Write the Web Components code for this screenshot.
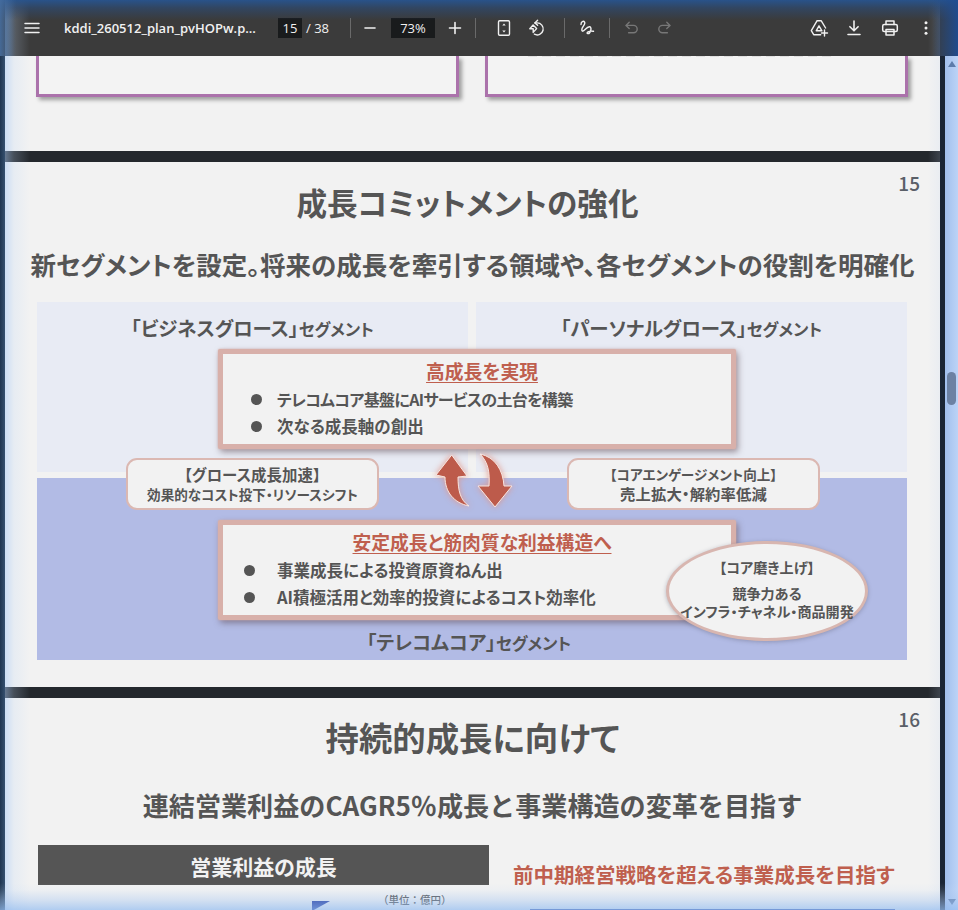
<!DOCTYPE html>
<html lang="ja">
<head>
<meta charset="utf-8">
<title>kddi_260512_plan_pvHOPw.pdf</title>
<style>
  html, body { margin: 0; height: 100%; overflow: hidden; background: #1b2636; }
  body { font-family: "Noto Sans CJK JP", "Noto Sans", sans-serif; color: #555; }
  .kana { font-size: 15.400px; letter-spacing: .1px; }
  .kanji { font-size: 15.300px; letter-spacing: .15px; }
  .tight { font-size: 16px; letter-spacing: -.65px; }
</style>
</head>
<body>
<pdf-viewer>
  <pdf-toolbar slot="toolbar" name="kddi_260512_plan_pvHOPw.p..." page="15" pages="38" zoom="73%"></pdf-toolbar>

  <pdf-page height="95">
    <clipped-boxes></clipped-boxes>
  </pdf-page>

  <pdf-page height="525" number="15">
    <slide-heading size="30.6" sub-size="25.5" top="18" sub-gap="21" shift="10">
      <span slot="title">成長コミットメントの強化</span>
      <span slot="sub">新セグメントを設定。将来の成長を牽引する領域や、各セグメントの役割を明確化</span>
    </slide-heading>
    <segment-diagram>
      <seg-label slot="left" name="「ビジネスグロース」"></seg-label>
      <seg-label slot="right" name="「パーソナルグロース」"></seg-label>
      <seg-label slot="bottom" name="「テレコムコア」"></seg-label>

      <call-box slot="over" style="left:213px;top:47px" heading="高成長を実現" dot="28">
        <li class="tight">テレコムコア基盤にAIサービスの土台を構築</li>
        <li>次なる成長軸の創出</li>
      </call-box>
      <call-box slot="over" style="left:213px;top:218px" heading="安定成長と筋肉質な利益構造へ" dot="21">
        <li>事業成長による投資原資ねん出</li>
        <li>AI積極活用と効率的投資によるコスト効率化</li>
      </call-box>

      <note-pill slot="over" style="left:121px;top:156px"><span class="kana">【グロース成長加速】</span><br>効果的なコスト投下・リソースシフト</note-pill>
      <note-pill slot="over" style="left:562px;top:156px">【コアエンゲージメント向上】<br><span class="kanji">売上拡大・解約率低減</span></note-pill>
      <swap-arrows slot="over" style="left:425px;top:148px"></swap-arrows>
      <note-oval slot="over" style="left:661px;top:239px">
        <span class="h">【コア磨き上げ】</span>
        競争力ある<br>インフラ・チャネル・商品開発
      </note-oval>
    </segment-diagram>
  </pdf-page>

  <pdf-page height="212" number="16">
    <slide-heading size="33.4" sub-size="26.1" top="17" sub-gap="27" shift="0" plain-sub>
      <span slot="title">持続的成長に向けて</span>
      <span slot="sub">連結営業利益のCAGR5％成長と事業構造の変革を目指す</span>
    </slide-heading>
    <profit-row></profit-row>
  </pdf-page>
</pdf-viewer>

<script>
const JP = '"Noto Sans CJK JP", "Noto Sans", sans-serif';

class PdfViewer extends HTMLElement {
  constructor() {
    super();
    this.attachShadow({ mode: 'open' }).innerHTML = `
      <style>
        :host { display: block; position: relative; width: 958px; height: 910px; overflow: hidden; background: #1b2636; }
        .body { display: grid; grid-template-columns: 5px 935px 5px 13px; height: 854px; }
        .pages { display: flex; flex-direction: column; gap: 11px; background: #24282d; overflow: hidden; }
        .glow { position: absolute; inset: 0; pointer-events: none;
          background:
            linear-gradient(to top, rgba(150,190,240,.72) 0, rgba(170,200,240,.42) 10px, rgba(200,220,245,.12) 20px, rgba(200,220,245,0) 27px),
            linear-gradient(to right, rgba(0,0,0,0) 5px, rgba(165,200,245,.5) 5px, rgba(190,215,245,.22) 14px, rgba(200,220,245,0) 30px),
            linear-gradient(to left, rgba(0,0,0,0) 18px, rgba(190,210,240,.16) 18px, rgba(200,220,245,0) 30px);
        }
        .top { position: absolute; left: 0; right: 0; top: 0; height: 20px; pointer-events: none;
          background: linear-gradient(to bottom, rgba(40,84,142,.95), rgba(44,76,120,.62) 8px, rgba(60,60,60,0) 20px); }
        .left { position: absolute; left: 0; top: 0; width: 16px; height: 56px; pointer-events: none;
          background: linear-gradient(to right, rgba(70,110,160,.9), rgba(60,60,60,0)); }
        .right { position: absolute; right: 0; top: 0; width: 26px; height: 56px; pointer-events: none;
          background: linear-gradient(to left, rgba(30,76,145,.95), rgba(60,60,60,0)); }
        .strip { background: linear-gradient(to right, #1e3550, #35506f); }
        .strip.r { background: #1b2636; }
      </style>
      <slot name="toolbar"></slot>
      <div class="body">
        <div class="strip"></div>
        <div class="pages"><slot></slot></div>
        <div class="strip r"></div>
        <scroll-rail></scroll-rail>
      </div>
      <div class="glow"></div>
      <div class="top"></div><div class="left"></div><div class="right"></div>`;
  }
}

const ICONS = {
  menu: '<path d="M3 5.5h14M3 10h14M3 14.5h14" stroke-width="1.5"/>',
  minus: '<path d="M5 10h10" stroke-width="1.6"/>',
  plus: '<path d="M10 4.5v11M4.5 10h11" stroke-width="1.6"/>',
  fit: '<rect x="4.5" y="2.8" width="11" height="14.4" rx="1.2" stroke-width="1.4"/><path d="M10 5.4l-1.7 2h3.4zM10 14.6l-1.7-2h3.4z" fill="currentColor" stroke="none"/>',
  rotate: '<path d="M7.2 10.8l-3.4-.1 3.3-3.7 3.5 3.6-3.4 3.8z" stroke-width="1.4"/><path d="M8.8 4.9h2.2a6 6 0 1 1-2.6 11.3" stroke-width="1.4"/><path d="M11.6 2.2L8.9 4.9l2.7 2.3" stroke-width="1.4"/>',
  draw: '<path d="M4 6.500C4 3.600 6.500 2.500 7.600 4.100 9.200 6.500 3.500 9.800 5 12.700 6.200 15 9.500 8.200 12.600 8.700 15.500 9.200 13.300 16.200 10.700 15.600 8.800 15.100 11.500 12.400 16.500 13.300" stroke-width="1.4"/>',
  undo: '<path d="M7.200 4.200L4 7.400l3.200 3" stroke-width="1.4"/><path d="M4.400 7.400h7.100a3.700 3.700 0 0 1 0 7.400H6.600" stroke-width="1.4"/>',
  redo: '<path d="M12.800 4.200L16 7.400l-3.200 3" stroke-width="1.4"/><path d="M15.600 7.400H8.500a3.700 3.700 0 0 0 0 7.400h4.900" stroke-width="1.4"/>',
  drive: '<path d="M8 2.800h4.300l4.300 7.200M8 2.800L2.300 12.700l2.400 4h7" stroke-width="1.400"/><path d="M10 7.800l2.900 5H7.200zM15.500 12v6M12.500 15h6" stroke-width="1.400"/>',
  download: '<path d="M10 3v9.500M5.900 8.700l4.100 4.100 4.100-4.100M4 16.500h12" stroke-width="1.600"/>',
  print: '<path d="M6 6.500V3h8v3.500" stroke-width="1.500"/><rect x="2.700" y="6.500" width="14.600" height="7" rx="1.500" stroke-width="1.500"/><path d="M6 11.500h8V17H6z" stroke-width="1.500"/>',
  more: '<circle cx="10" cy="4.800" r="1.500" fill="currentColor" stroke="none"/><circle cx="10" cy="10" r="1.500" fill="currentColor" stroke="none"/><circle cx="10" cy="15.200" r="1.500" fill="currentColor" stroke="none"/>'
};

function icon(name, cls) {
  return `<span class="ic ${cls || ''}"><svg viewBox="0 0 20 20" width="20" height="20" fill="none" stroke="currentColor" stroke-linecap="round" stroke-linejoin="round">${ICONS[name]}</svg></span>`;
}

class PdfToolbar extends HTMLElement {
  connectedCallback() {
    const a = (n) => this.getAttribute(n);
    this.attachShadow({ mode: 'open' }).innerHTML = `
      <style>
        :host { display: flex; align-items: center; height: 56px; padding-left: 22px; box-sizing: border-box; background: #3b3b3b; color: #f1f1f1;
          font: 13px "Open Sans", "Noto Sans", sans-serif; position: relative; }
        .ic { display: flex; align-items: center; justify-content: center; width: 20px; height: 20px; flex: none; }
        .ic.off { color: #777; }
        .name { font-weight: 600; margin-left: 22px; width: 214px; white-space: nowrap; }
        .box { background: #191b1c; height: 20px; line-height: 20px; text-align: center; flex: none; }
        .pg { width: 24px; }
        .of { margin-left: 4px; width: 44px; }
        .sep { width: 1px; height: 20px; background: #6a6a6a; flex: none; }
        .zm { width: 44px; }
        .spacer { flex: 1; }
      </style>
      ${icon('menu')}
      <span class="name">${a('name')}</span>
      <span class="box pg">${a('page')}</span>
      <span class="of">/ ${a('pages')}</span>
      <span class="sep"></span>
      <span style="width:9px"></span>${icon('minus')}<span style="width:11px"></span>
      <span class="box zm">${a('zoom')}</span>
      <span style="width:10px"></span>${icon('plus')}<span style="width:10px"></span>
      <span class="sep"></span>
      <span style="width:18px"></span>${icon('fit')}<span style="width:12px"></span>${icon('rotate')}<span style="width:18px"></span>
      <span class="sep"></span>
      <span style="width:12px"></span>${icon('draw')}<span style="width:12px"></span>
      <span class="sep"></span>
      <span style="width:12px"></span>${icon('undo', 'off')}<span style="width:12px"></span>${icon('redo', 'off')}
      <span class="spacer"></span>
      ${icon('drive')}<span style="width:15px"></span>${icon('download')}<span style="width:16px"></span>${icon('print')}<span style="width:16px"></span>${icon('more')}
      <span style="width:22px"></span>`;
  }
}

class ScrollRail extends HTMLElement {
  constructor() {
    super();
    this.attachShadow({ mode: 'open' }).innerHTML = `
      <style>
        :host { display: flex; flex-direction: column; align-items: center; width: 13px; height: 854px; box-sizing: border-box;
          background: linear-gradient(to right, #a2c0ee, #bcd3f6); }
        .up, .down { width: 0; height: 0; border: 4.5px solid transparent; }
        .up { border-bottom: 6px solid #5d7cab; border-top: 0; margin-top: 5px; }
        .thumb { width: 9px; height: 33px; border-radius: 5px; background: #6c81a3; margin-top: 305px; }
        .down { border-top: 6px solid #5d7cab; border-bottom: 0; margin-top: auto; margin-bottom: 5px; }
      </style>
      <div class="up"></div><div class="thumb"></div><div class="down"></div>`;
  }
}

class PdfPage extends HTMLElement {
  connectedCallback() {
    const n = this.getAttribute('number');
    this.attachShadow({ mode: 'open' }).innerHTML = `
      <style>
        :host { display: block; position: relative; flex: none; background: #f2f2f2; overflow: hidden; height: ${this.getAttribute('height')}px; }
        .no { position: absolute; right: 20px; top: 7px; font: 500 19px/28px ${JP}; color: #5a5f68; }
      </style>
      ${n ? `<div class="no">${n}</div>` : ''}<slot></slot>`;
  }
}

class ClippedBoxes extends HTMLElement {
  constructor() {
    super();
    this.attachShadow({ mode: 'open' }).innerHTML = `
      <style>
        :host { display: grid; grid-template-columns: 423px 423px; column-gap: 26px; padding-left: 31px; height: 41px; }
        div { border: 3px solid #ab72ab; border-top: 0; background: #f3f3f3; box-shadow: 3px 3px 4px rgba(0,0,0,.35); position: relative; }
        .cut::before { content: ""; display: block; margin: 0 70px 0 40px; height: 1px;
          background: repeating-linear-gradient(to right, #bbb 0 9px, transparent 9px 14px); opacity: .35; }
      </style>
      <div></div><div class="cut"></div>`;
  }
}

class SlideHeading extends HTMLElement {
  connectedCallback() {
    const a = (n) => this.getAttribute(n);
    this.attachShadow({ mode: 'open' }).innerHTML = `
      <style>
        :host { display: flex; flex-direction: column; align-items: center; padding-top: ${a('top')}px; font-family: ${JP}; font-weight: 700; color: #555; white-space: nowrap; }
        .t { font-size: ${a('size')}px; line-height: 44px; padding-right: ${a('shift')}px; font-feature-settings: "palt"; }
        .s { font-size: ${a('sub-size')}px; line-height: 38px; margin-top: ${a('sub-gap')}px; font-feature-settings: ${this.hasAttribute('plain-sub') ? 'normal' : '"palt"'}; }
      </style>
      <div class="t"><slot name="title"></slot></div>
      <div class="s"><slot name="sub"></slot></div>`;
  }
}

class SegmentDiagram extends HTMLElement {
  constructor() {
    super();
    this.attachShadow({ mode: 'open' }).innerHTML = `
      <style>
        :host { display: block; position: absolute; left: 0; right: 0; top: 140px; height: 358px; padding: 0 32px; font-family: ${JP}; }
        .grid { display: grid; grid-template-columns: 431px 431px; grid-template-rows: 170px 182px; gap: 6px 8px; }
        .up { background: #e8ebf4; display: flex; justify-content: center; padding-top: 10px; height: 160px; }
        .down { grid-column: 1 / 3; background: #b2bbe5; display: flex; justify-content: center; align-items: flex-end; padding-bottom: 1px; padding-right: 6px; }
      </style>
      <div class="grid">
        <div class="up"><slot name="left"></slot></div>
        <div class="up"><slot name="right"></slot></div>
        <div class="down"><slot name="bottom"></slot></div>
      </div>
      <slot name="over"></slot>`;
  }
}

class SegLabel extends HTMLElement {
  connectedCallback() {
    this.attachShadow({ mode: 'open' }).innerHTML = `
      <style>
        :host { display: block; font-family: ${JP}; font-weight: 700; color: #555; white-space: nowrap; font-feature-settings: "palt"; line-height: 32px; }
        .n { font-size: 19.400px; }
        .s { font-size: 16.600px; }
      </style>
      <span class="n">${this.getAttribute('name')}</span><span class="s">セグメント</span>`;
  }
}

class CallBox extends HTMLElement {
  connectedCallback() {
    this.attachShadow({ mode: 'open' }).innerHTML = `
      <style>
        :host { display: block; position: absolute; width: 518px; height: 100px; box-sizing: border-box; background: #f2f2f2;
          border: 5px solid #d8b0aa; border-radius: 2px; box-shadow: 0 0 2px #d8b0aa, 2px 3px 6px rgba(90,70,80,.55);
          font-family: ${JP}; font-weight: 700; color: #555; font-feature-settings: "palt"; }
        .h { text-align: center; padding-left: 10px; font-size: 18.800px; line-height: 28px; margin: 3px 0 1px; color: #bf5f4e; text-decoration: underline; text-underline-offset: 3px; text-decoration-thickness: 1px; }
        ::slotted(li) { list-style: none; font-size: 16.500px; line-height: 27px; position: relative; margin-left: 54px; white-space: nowrap; }
        .dots { position: absolute; left: ${this.getAttribute('dot')}px; top: 40px; }
        .dots i { display: block; width: 11px; height: 11px; border-radius: 50%; background: #555; margin-bottom: 16px; }
      </style>
      <div class="h">${this.getAttribute('heading')}</div>
      <div class="dots"><i></i><i></i></div>
      <slot></slot>`;
  }
}

class NotePill extends HTMLElement {
  constructor() {
    super();
    this.attachShadow({ mode: 'open' }).innerHTML = `
      <style>
        :host { display: flex; align-items: center; justify-content: center; position: absolute; width: 253px; height: 52px; box-sizing: border-box; background: #f2f2f2;
          border: 2px solid #dbb8b2; border-radius: 11px; text-align: center; font: 700 13.600px/19px ${JP}; color: #555; font-feature-settings: "palt"; white-space: nowrap; }
      </style>
      <div><slot></slot></div>`;
  }
}

class NoteOval extends HTMLElement {
  constructor() {
    super();
    this.attachShadow({ mode: 'open' }).innerHTML = `
      <style>
        :host { display: flex; align-items: center; justify-content: center; position: absolute; width: 202px; height: 100px; box-sizing: border-box; background: #f2f2f2;
          border: 3px solid #d8b6b0; border-radius: 50%; box-shadow: 0 1px 4px rgba(90,90,110,.4); text-align: center; font: 700 14.100px/18px ${JP}; color: #555; font-feature-settings: "palt"; white-space: nowrap; }
        div { margin-top: -4px; }
        ::slotted(.h) { display: block; margin-bottom: 8px; }
      </style>
      <div><slot></slot></div>`;
  }
}

class SwapArrows extends HTMLElement {
  constructor() {
    super();
    this.attachShadow({ mode: 'open' }).innerHTML = `
      <style>
        :host { display: block; position: absolute; width: 95px; height: 65px; }
        svg { display: block; overflow: visible; filter: drop-shadow(0 0 3px rgba(225,150,135,.9)); }
      </style>
      <svg width="95" height="65" viewBox="430 450 95 65" fill="#bd5b4b" stroke="#f6e6e2" stroke-width="1" stroke-linejoin="round">
        <path d="M451.700 455L467 476L458 477C458 490 460 500 469 506C454 503 445 492 445 477L436 475Z"/>
        <path d="M495 507L478 486L489 486C490 472 488 462 480 454C495 457 503 470 504 486L512 486Z"/>
      </svg>`;
  }
}

class ProfitRow extends HTMLElement {
  constructor() {
    super();
    this.attachShadow({ mode: 'open' }).innerHTML = `
      <style>
        :host { display: grid; grid-template-columns: 451px 1fr; column-gap: 24px; padding: 21px 0 0 33px; font-family: ${JP}; font-weight: 700; white-space: nowrap; font-feature-settings: "palt"; }
        .bar { background: #555; color: #f2f2f2; height: 40px; line-height: 42px; text-align: center; font-size: 21px; }
        .goal { color: #bf5f4e; font-size: 20.500px; line-height: 30px; margin-top: 14px; }
        .unit { font-size: 10.500px; font-weight: 500; line-height: 15px; padding: 7px 0 0 340px; color: #4a4a4a; position: relative; font-feature-settings: normal; }
        .tri { position: absolute; left: 274px; top: 16px; width: 0; height: 0; border-left: 18px solid #0a2596; border-top: 0 solid transparent; border-bottom: 10px solid transparent; }
        .rule { height: 1px; background: #23409c; margin: 20px 45px 0 17px; width: 365px; }
      </style>
      <div>
        <div class="bar">営業利益の成長</div>
        <div class="unit">（単位：億円）<span class="tri"></span></div>
      </div>
      <div>
        <div class="goal">前中期経営戦略を超える事業成長を目指す</div>
        <div class="rule"></div>
      </div>`;
  }
}

customElements.define('pdf-viewer', PdfViewer);
customElements.define('pdf-toolbar', PdfToolbar);
customElements.define('scroll-rail', ScrollRail);
customElements.define('pdf-page', PdfPage);
customElements.define('clipped-boxes', ClippedBoxes);
customElements.define('slide-heading', SlideHeading);
customElements.define('segment-diagram', SegmentDiagram);
customElements.define('seg-label', SegLabel);
customElements.define('call-box', CallBox);
customElements.define('note-pill', NotePill);
customElements.define('note-oval', NoteOval);
customElements.define('swap-arrows', SwapArrows);
customElements.define('profit-row', ProfitRow);
</script>
</body>
</html>
